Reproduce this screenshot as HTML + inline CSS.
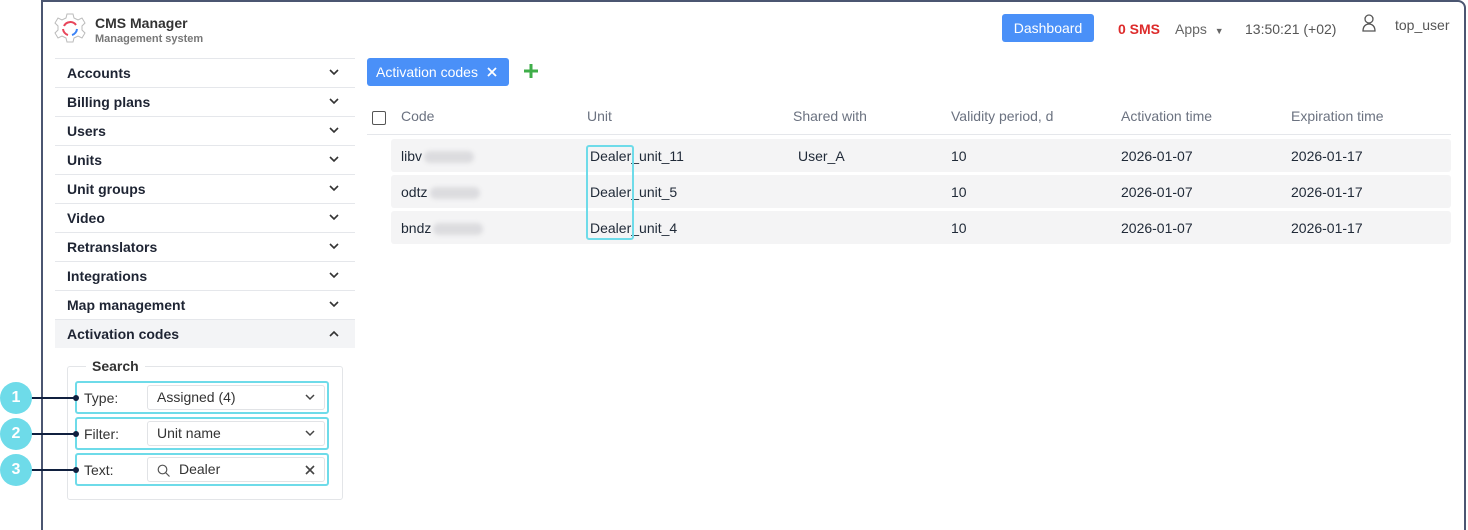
<!DOCTYPE html>
<html><head><meta charset="utf-8"><style>
*{box-sizing:border-box;margin:0;padding:0}
body{width:1468px;height:513px;background:#fff;font-family:"Liberation Sans",Arial,sans-serif;position:relative;overflow:hidden;color:#1f2937}
.frame{position:absolute;left:41px;top:0;width:1425px;height:530px;border:2px solid #4b5671;border-top-right-radius:8px;border-bottom:none}
.abs{position:absolute}
.menu{position:absolute;left:55px;top:58px;width:300px}
.mi{height:29px;border-top:1px solid #e5e7eb;font-size:14px;font-weight:bold;color:#1e2433;padding-left:12px;line-height:28px;position:relative}
.mi svg{position:absolute;right:16px;top:10px}
.mi.act{background:#f3f4f6}
.fs{position:absolute;left:67px;top:366px;width:276px;height:134px;border:1px solid #e3e5e8;border-radius:3px}
.lg{position:absolute;left:86px;top:358px;background:#fff;padding:0 6px;font-size:14px;color:#333;font-weight:bold}
.hl{position:absolute;left:75px;width:254px;height:33px;border:2px solid #6edbe9;border-radius:3px}
.hl .lb{position:absolute;left:7px;top:7px;font-size:14px;color:#333}
.hl .in{position:absolute;left:70px;top:2px;width:178px;height:25px;border:1px solid #e1e3e6;border-radius:3px;font-size:14px;color:#333;line-height:23px;padding-left:9px}
.hl .in svg.c{position:absolute;right:9px;top:8px}
.cir{position:absolute;left:0;width:32px;height:32px;border-radius:50%;background:#6edbe9;color:#fff;font-weight:bold;font-size:16px;text-align:center;line-height:32px}
.ln{position:absolute;left:30px;width:47px;height:2px;background:#10203f}
.dt{position:absolute;left:73px;width:6px;height:6px;border-radius:50%;background:#10203f}
.th{position:absolute;top:108px;font-size:14px;color:#6b7280}
.row{position:absolute;left:391px;width:1060px;height:33px;background:#f4f4f5;border-radius:3px}
.td{position:absolute;font-size:14px;color:#1f2937}
.blur{position:absolute;width:50px;height:12px;background:#dcdcdf;border-radius:6px;filter:blur(2px)}
</style></head><body>
<div class="frame"></div>
<svg class="abs" style="left:53px;top:12px" width="34" height="34" viewBox="0 0 34 34"><path d="M14 2h6l1 4 4 2 4-2 3 5-3 3v4l3 3-3 5-4-2-4 2-1 4h-6l-1-4-4-2-4 2-3-5 3-3v-4l-3-3 3-5 4 2 4-2z" fill="none" stroke="#bbb" stroke-width="1"/><path d="M11 14a7 7 0 0 1 12-1" fill="none" stroke="#e8455a" stroke-width="2"/><path d="M24 17a7 7 0 0 1-5 6" fill="none" stroke="#3b82f6" stroke-width="2"/><path d="M15 23a7 7 0 0 1-5-6" fill="none" stroke="#e8455a" stroke-width="2"/></svg>
<div class="abs" style="left:95px;top:15px;font-size:14px;font-weight:bold;color:#333">CMS Manager</div>
<div class="abs" style="left:95px;top:33px;font-size:11px;font-weight:bold;color:#777">Management system</div>
<div class="abs" style="left:1002px;top:14px;width:92px;height:28px;background:#4a90f8;border-radius:3px;color:#fff;font-size:14px;text-align:center;line-height:28px">Dashboard</div>
<div class="abs" style="left:1118px;top:21px;font-size:14px;font-weight:bold;color:#dd2b2b">0 SMS</div>
<div class="abs" style="left:1175px;top:21px;font-size:14px;color:#666">Apps &nbsp;<span style="font-size:9px">▼</span></div>
<div class="abs" style="left:1245px;top:21px;font-size:14px;color:#555">13:50:21 (+02)</div>
<svg class="abs" style="left:1361px;top:14px" width="16" height="18" viewBox="0 0 16 18"><circle cx="8" cy="5" r="4" fill="none" stroke="#555" stroke-width="1.3"/><path d="M2 17c0-5 3-7 6-7s6 2 6 7z" fill="none" stroke="#555" stroke-width="1.3"/></svg>
<div class="abs" style="left:1395px;top:17px;font-size:14px;color:#555">top_user</div>

<div class="menu">
<div class="mi">Accounts<svg width="10" height="7"><path d="M1 1l4 4 4-4" fill="none" stroke="#333" stroke-width="1.6"/></svg></div>
<div class="mi">Billing plans<svg width="10" height="7"><path d="M1 1l4 4 4-4" fill="none" stroke="#333" stroke-width="1.6"/></svg></div>
<div class="mi">Users<svg width="10" height="7"><path d="M1 1l4 4 4-4" fill="none" stroke="#333" stroke-width="1.6"/></svg></div>
<div class="mi">Units<svg width="10" height="7"><path d="M1 1l4 4 4-4" fill="none" stroke="#333" stroke-width="1.6"/></svg></div>
<div class="mi">Unit groups<svg width="10" height="7"><path d="M1 1l4 4 4-4" fill="none" stroke="#333" stroke-width="1.6"/></svg></div>
<div class="mi">Video<svg width="10" height="7"><path d="M1 1l4 4 4-4" fill="none" stroke="#333" stroke-width="1.6"/></svg></div>
<div class="mi">Retranslators<svg width="10" height="7"><path d="M1 1l4 4 4-4" fill="none" stroke="#333" stroke-width="1.6"/></svg></div>
<div class="mi">Integrations<svg width="10" height="7"><path d="M1 1l4 4 4-4" fill="none" stroke="#333" stroke-width="1.6"/></svg></div>
<div class="mi">Map management<svg width="10" height="7"><path d="M1 1l4 4 4-4" fill="none" stroke="#333" stroke-width="1.6"/></svg></div>
<div class="mi act">Activation codes<svg width="10" height="7"><path d="M1 6l4-4 4 4" fill="none" stroke="#333" stroke-width="1.6"/></svg></div>
</div>
<div class="fs"></div><div class="lg">Search</div>
<div class="hl" style="top:381px"><span class="lb">Type:</span><div class="in">Assigned (4)<svg class="c" width="10" height="7"><path d="M1 1l4 4 4-4" fill="none" stroke="#444" stroke-width="1.5"/></svg></div></div>
<div class="hl" style="top:417px"><span class="lb">Filter:</span><div class="in">Unit name<svg class="c" width="10" height="7"><path d="M1 1l4 4 4-4" fill="none" stroke="#444" stroke-width="1.5"/></svg></div></div>
<div class="hl" style="top:453px"><span class="lb">Text:</span><div class="in" style="padding-left:31px"><svg class="abs" style="left:9px;top:6px" width="13" height="13"><circle cx="5.5" cy="5.5" r="4.3" fill="none" stroke="#555" stroke-width="1.2"/><path d="M8.5 8.5l4 4" stroke="#555" stroke-width="1.2"/></svg>Dealer<svg class="c" width="10" height="10" style="top:7px"><path d="M1 1l8 8M9 1l-8 8" stroke="#444" stroke-width="1.6"/></svg></div></div>
<div class="ln" style="top:397px"></div><div class="dt" style="top:395px"></div><div class="cir" style="top:382px">1</div>
<div class="ln" style="top:433px"></div><div class="dt" style="top:431px"></div><div class="cir" style="top:418px">2</div>
<div class="ln" style="top:469px"></div><div class="dt" style="top:467px"></div><div class="cir" style="top:454px">3</div>

<div class="abs" style="left:367px;top:58px;width:142px;height:28px;background:#4a90f8;border-radius:3px;color:#fff;font-size:14px;line-height:28px;padding-left:9px">Activation codes <svg width="10" height="10" style="margin-left:5px"><path d="M1 1l8 8M9 1l-8 8" stroke="#fff" stroke-width="1.8"/></svg></div>
<svg class="abs" style="left:524px;top:64px" width="14" height="14"><path d="M7 0v14M0 7h14" stroke="#3fae49" stroke-width="3"/></svg>
<div class="abs" style="left:372px;top:111px;width:14px;height:14px;border:1.5px solid #555;border-radius:2px"></div>
<div class="th" style="left:401px">Code</div><div class="th" style="left:587px">Unit</div><div class="th" style="left:793px">Shared with</div><div class="th" style="left:951px">Validity period, d</div><div class="th" style="left:1121px">Activation time</div><div class="th" style="left:1291px">Expiration time</div>
<div class="abs" style="left:367px;top:134px;width:1084px;height:1px;background:#e5e7eb"></div>
<div class="row" style="top:139px"></div><div class="row" style="top:175px"></div><div class="row" style="top:211px"></div>
<div class="td" style="left:401px;top:148px">libv</div><div class="blur" style="left:424px;top:151px"></div>
<div class="td" style="left:401px;top:184px">odtz</div><div class="blur" style="left:430px;top:187px"></div>
<div class="td" style="left:401px;top:220px">bndz</div><div class="blur" style="left:433px;top:223px"></div>
<div class="td" style="left:590px;top:148px">Dealer_unit_11</div><div class="td" style="left:590px;top:184px">Dealer_unit_5</div><div class="td" style="left:590px;top:220px">Dealer_unit_4</div>
<div class="td" style="left:798px;top:148px">User_A</div>
<div class="td" style="left:951px;top:148px">10</div><div class="td" style="left:951px;top:184px">10</div><div class="td" style="left:951px;top:220px">10</div>
<div class="td" style="left:1121px;top:148px">2026-01-07</div><div class="td" style="left:1121px;top:184px">2026-01-07</div><div class="td" style="left:1121px;top:220px">2026-01-07</div>
<div class="td" style="left:1291px;top:148px">2026-01-17</div><div class="td" style="left:1291px;top:184px">2026-01-17</div><div class="td" style="left:1291px;top:220px">2026-01-17</div>
<div class="abs" style="left:586px;top:145px;width:48px;height:95px;border:2px solid #6edbe9;border-radius:3px"></div>
</body></html>
